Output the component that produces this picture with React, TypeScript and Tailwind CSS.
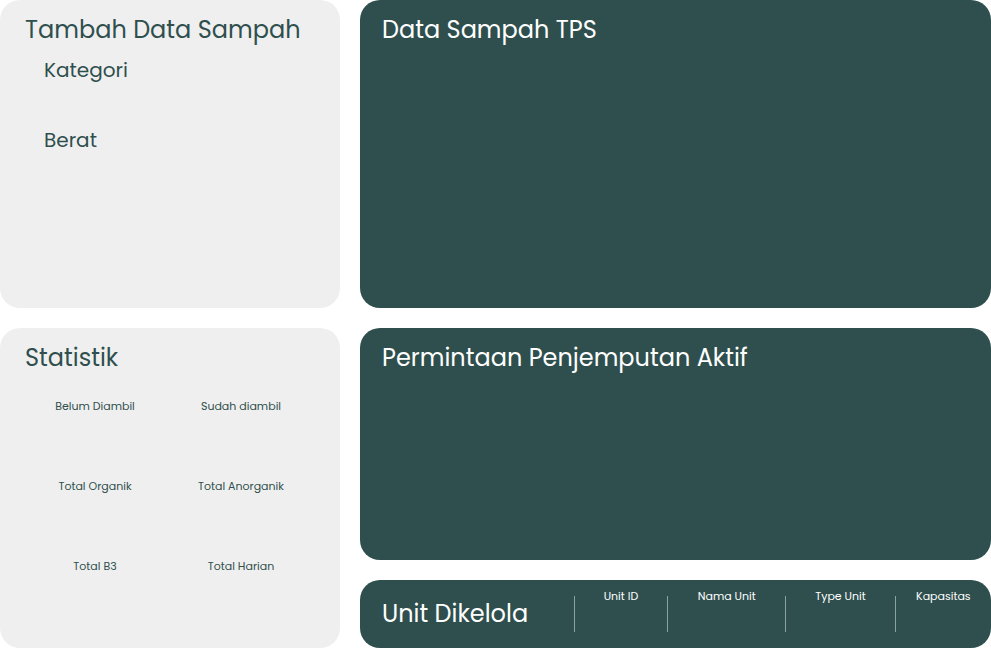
import React from "react";

const font = { fontFamily: "Poppins, 'Open Sans', sans-serif" };

function Sep() {
  return <div className="w-px h-9 mt-4 bg-[#8aa3a0]" />;
}

export default function App() {
  const stats = [
    "Belum Diambil",
    "Sudah diambil",
    "Total Organik",
    "Total Anorganik",
    "Total B3",
    "Total Harian",
  ];
  return (
    <div
      className="w-[991px] h-[648px] bg-white grid grid-cols-[340px_631px] grid-rows-[308px_320px] gap-5 overflow-hidden"
      style={font}
    >
      <div className="bg-[#efefef] rounded-[20px] pl-[25px] pt-[12px] text-[#2f4f4e]">
        <div className="text-[24px] leading-[36px]">Tambah Data Sampah</div>
        <div className="pl-[19px] mt-[7px] text-[20px] leading-[30px]">Kategori</div>
        <div className="pl-[19px] mt-[40px] text-[20px] leading-[30px]">Berat</div>
      </div>
      <div className="bg-[#2f4f4e] rounded-[20px] pl-[22px] pt-[12px] text-white">
        <div className="text-[24px] leading-[36px]">Data Sampah TPS</div>
      </div>
      <div className="bg-[#efefef] rounded-[20px] pl-[25px] pt-[12px] text-[#2f4f4e]">
        <div className="text-[24px] leading-[36px]">Statistik</div>
        <div className="grid grid-cols-[146px_146px] -ml-[3px] mt-[22px] gap-y-[63px]">
          {stats.map((s) => (
            <div key={s} className="text-center text-[11px] leading-[17px]">
              {s}
            </div>
          ))}
        </div>
      </div>
      <div className="flex flex-col gap-5">
        <div className="flex-1 bg-[#2f4f4e] rounded-[20px] pl-[22px] pt-[12px] text-white">
          <div className="text-[24px] leading-[36px]">Permintaan Penjemputan Aktif</div>
        </div>
        <div className="h-[68px] bg-[#2f4f4e] rounded-[20px] flex text-white">
          <div className="w-[215px] pl-[22px] flex items-center text-[24px] leading-[36px]">
            Unit Dikelola
          </div>
          <Sep />
          <div className="w-[93px] text-center text-[11px] leading-[17px] pt-[8px]">Unit ID</div>
          <Sep />
          <div className="w-[118px] text-center text-[11px] leading-[17px] pt-[8px]">Nama Unit</div>
          <Sep />
          <div className="w-[109px] text-center text-[11px] leading-[17px] pt-[8px]">Type Unit</div>
          <Sep />
          <div className="w-[96px] text-center text-[11px] leading-[17px] pt-[8px]">Kapasitas</div>
        </div>
      </div>
    </div>
  );
}
